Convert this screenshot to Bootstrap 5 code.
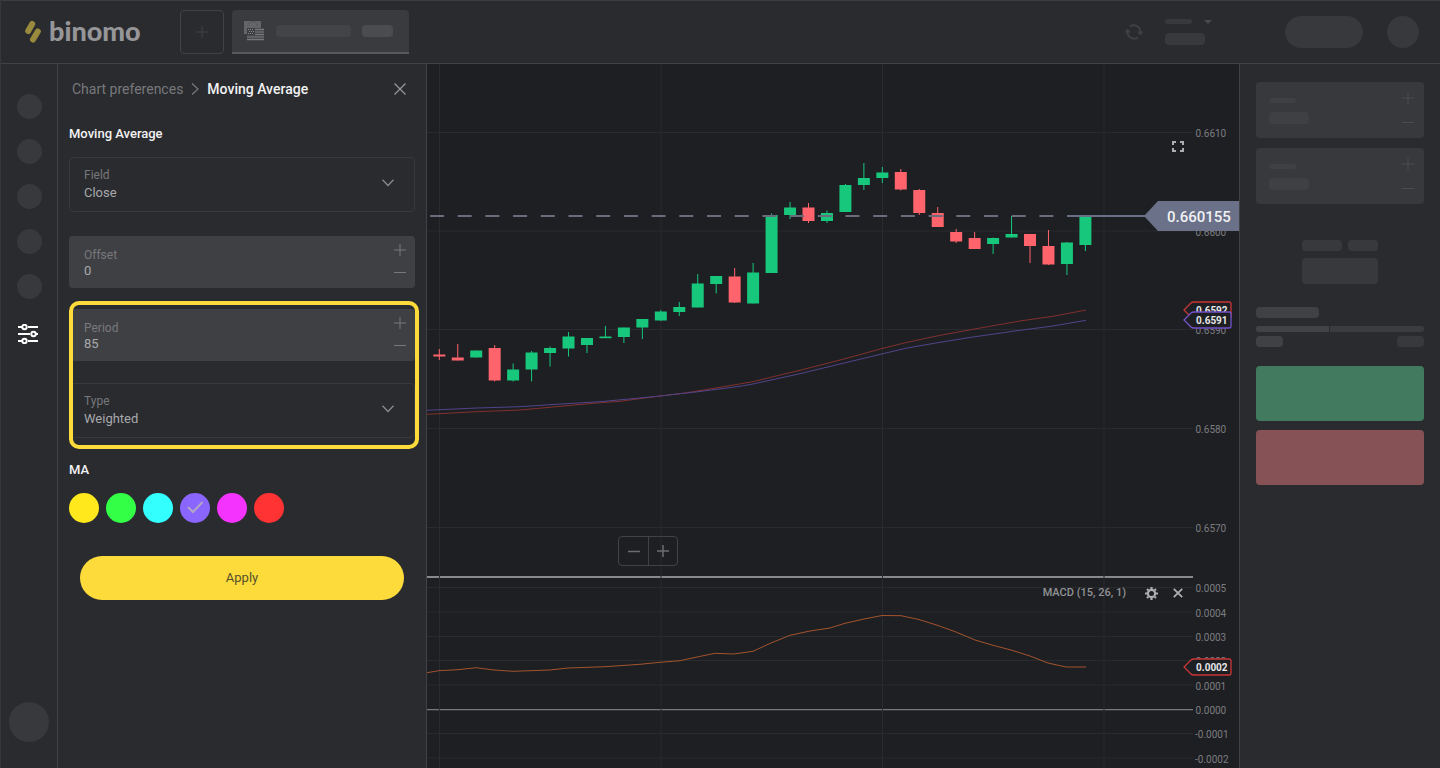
<!DOCTYPE html>
<html lang="en">
<head>
<meta charset="utf-8">
<meta name="viewport" content="width=device-width, initial-scale=1">
<title>Binomo – Chart preferences</title>
<link href="https://cdn.jsdelivr.net/npm/bootstrap@5.3.0/dist/css/bootstrap.min.css" rel="stylesheet">
<style>
  :root { --panel: #2a2b2f; --chart: #1e1f23; --line: #414246; --block: #38393d; --block-lit: #404145; }
  body { background: var(--panel); color: #a8a9ac; font-family: Roboto, "Liberation Sans", sans-serif; font-size: 14px; line-height: 20px; border-left: 1px solid #36373b; }
  .plain { background: none; border: 0; padding: 0; line-height: 0; color: #77787b; }
  svg { display: block; flex: none; }

  .topbar { height: 64px; border-top: 1px solid #3c3d41; border-bottom: 1px solid var(--line); padding: 0 21px 0 24px; }
  .brand { font-family: Lato, sans-serif; font-weight: 900; font-size: 27px; line-height: 30px; gap: 8px; width: 155px; padding-bottom: 2px; }
  .brand, .brand:hover { color: #969698; }
  .tab-add { width: 44px; height: 44px; border: 1px solid #414246; border-radius: 4px; color: #414246; margin-right: 8px; }
  .tab-asset { width: 177px; height: 44px; background: #3a3b3f; border-bottom: 2px solid #56575b; border-radius: 4px 4px 0 0; padding: 0 16px 0 12px; }
  .tab-asset .ph { background: #434448; }
  .tab-asset .ph:last-child { background: #4b4c50; }
  .ph { background: var(--block); border-radius: 4px; display: block; }
  .ph-lit { background: var(--block-lit); }
  .w27 { width: 27px; } .w31 { width: 31px; } .w40 { width: 40px; } .w63 { width: 63px; } .w75 { width: 75px; }
  .t5 { height: 5px; } .t11 { height: 11px; } .t12 { height: 12px; } .t26 { height: 26px; }
  .gap6 { gap: 6px; }
  .balance { width: 47px; margin: 0 73px 0 22px; }
  .balance .w40 { margin-top: 9px; }
  .deposit { width: 78px; height: 32px; border-radius: 16px; margin-right: 24px; }
  .avatar { width: 32px; height: 32px; border-radius: 50%; }

  .rail { width: 57px; border-right: 1px solid #424347; flex: none; padding: 30px 0 26px; }
  .rail-list { gap: 20px; }
  .rail-dot { width: 25px; height: 25px; border-radius: 50%; background: var(--block); }
  .rail-tune { height: 29px; color: #fff; }
  .rail-user { width: 40px; height: 40px; }

  .side { width: 369px; flex: none; border-right: 1px solid var(--line); padding: 15px 11px 0; }
  .crumbs { font-size: 14px; gap: 8px; padding: 0 9px 0 3px; margin-bottom: 25px; }
  .crumbs a { color: #77787b; }
  .crumbs .now { color: #f2f2f3; font-weight: 500; }
  .head { font-size: 13px; line-height: 20px; font-weight: 500; color: #f2f2f3; margin: 0 0 13px; }
  .field { border-radius: 4px; }
  .field label { display: block; font-size: 12px; line-height: 14px; color: #77787b; }
  .field input, .field select { appearance: none; background: none; border: 0; padding: 0; width: 100%; display: block; color: #a8a9ac; font-size: 13px; line-height: 20px; height: 20px; outline: 0; }
  .field-pick { border: 1px solid #38393d; height: 55px; padding: 10px 20px 0 14px; color: #8a8b8e; }
  .field-pick svg { pointer-events: none; margin-top: 11px; }
  .field-pick label { margin-bottom: 1px; }
  .field-num { background: #3f4044; height: 52px; padding: 12px 9px 0 15px; }
  .field-num input { height: 18px; line-height: 18px; }
  .steps { gap: 10px; margin-top: -4px; height: 34px; }
  .mt24 { margin-top: 24px; } .mt22 { margin-top: 22px; } .mt21 { margin-top: 21px; }
  .spot { position: relative; }
  .spot::after { content: ""; position: absolute; inset: -8px -4px -11px 0; border: 4px solid #fddb3b; border-radius: 10px; pointer-events: none; }
  .hues { gap: 7px; }
  .hue { position: relative; }
  .hue input { appearance: none; width: 30px; height: 30px; margin: 0; border-radius: 50%; display: block; }
  .hue svg { position: absolute; inset: 0; display: none; pointer-events: none; }
  .hue input:checked + svg { display: block; }
  .yellow { background: #ffe81c; } .green { background: #33ff47; } .cyan { background: #33ffff; }
  .violet { background: #8a66ff; } .pink { background: #f533ff; } .red { background: #ff3333; }
  .apply { background: #fddb3b; color: #55502b; border-radius: 22px; height: 44px; margin: 33px 11px 0; font-size: 13px; line-height: 20px; }
  .apply:hover { background: #ffe25a; }

  .chart { background: var(--chart); min-width: 0; position: relative; }
  .plot { width: 100%; height: 100%; }
  .plot text { font-size: 10px; fill: #7c7d80; }
  .plot .tag { font-weight: 700; fill: #e6e6e8; }
  .plot .price { font-size: 15px; font-weight: 500; fill: #f0f1f5; }
  .zoomer { position: absolute; left: 191px; top: 472px; border: 1px solid #414246; border-radius: 4px; }
  .zoomer button { width: 29px; height: 28px; color: #6c6d70; }
  .zoomer .more { border-left: 1px solid #414246; }
  .full { position: absolute; right: 55px; top: 77px; color: #aeaeb0; }
  .macd { position: absolute; right: 56px; top: 519px; gap: 15px; font-size: 11px; font-weight: 500; color: #929396; }
  .macd .plain { color: #aeaeb0; }
  .macd span { margin-right: 4px; }

  .trade { width: 201px; flex: none; border-left: 1px solid var(--line); padding: 18px 16px 0; }
  .stake { background: var(--block); border-radius: 4px; height: 56px; padding: 10px 10px 0 13px; margin-bottom: 10px; color: #4b4c50; }
  .stake .ph { background: #3f4044; }
  .stake .plain { color: #4b4c50; }
  .stake .w27 { margin: 6px 0 9px; }
  .stake .steps { gap: 12px; margin-top: 0; height: 36px; }
  .timer { width: 76px; margin: 36px auto 23px; gap: 7px; }
  .track { height: 6px; border-radius: 3px; margin: 8px 0 4px; background: #3b3c40; overflow: hidden; }
  .track span { background: #424347; border-right: 1px solid var(--panel); width: 44%; }
  .deal { height: 55px; border-radius: 4px; border: 0; }
  .deal-up { background: #427a60; margin: 19px 0 9px; }
  .deal-down { background: #865256; }
</style>
</head>
<body class="d-flex flex-column min-vh-100">

<svg width="0" height="0" class="position-absolute" aria-hidden="true">
  <symbol id="plus" viewBox="0 0 12 12"><path d="M6 0v12M0 6h12" stroke="currentColor" fill="none"/></symbol>
  <symbol id="minus" viewBox="0 0 12 12"><path d="M0 6.500h12" stroke="currentColor" fill="none"/></symbol>
  <symbol id="down" viewBox="0 0 12 8"><path d="M.5.8 6 6.500 11.500.8" stroke="currentColor" stroke-width="1.300" fill="none"/></symbol>
</svg>

<header class="topbar d-flex align-items-center">
  <a href="#" class="brand d-flex align-items-center text-decoration-none">
    <svg width="16" height="24" viewBox="0 0 16 24" fill="none" stroke="#9a8a3e" stroke-width="6" stroke-linecap="round"><path d="M3.200 12 7.200 5M8 20.500 12.800 12.500"/></svg>
    <span>binomo</span>
  </a>
  <button class="tab-add plain d-flex align-items-center justify-content-center" aria-label="Add asset"><svg width="12" height="12"><use href="#plus"/></svg></button>
  <button class="tab-asset plain d-flex align-items-center justify-content-between" aria-label="Current asset">
    <svg width="20" height="20" viewBox="0 0 20 20">
      <path fill="#646568" d="M0 0h17v13H0z"/><path d="M4 5a4.500 4.500 0 0 1 9 0" fill="none" stroke="#4b4c50" stroke-dasharray="1 1"/>
      <path fill="#4a4b4f" d="M3 7h17v13H3z"/><path d="M11 8.500h9M11 11h9M11 13.500h9M3 16h17M3 18.500h17" stroke="#77787b"/>
      <path fill="#3c3d41" d="M3 7h8v7H3z"/><path d="M4 8.500h6M5 10.500h6M4 12.500h6" stroke="#8a8b8e" stroke-dasharray="1 1"/>
    </svg>
    <span class="ph w75 t12"></span><span class="ph w31 t12"></span>
  </button>

  <button class="plain ms-auto" aria-label="Refresh">
    <svg width="18" height="16" viewBox="0 0 18 16" fill="none" stroke="#3f4044" stroke-width="2"><path d="M5 2.500A6.700 6.700 0 0 1 15.500 8M13 13.500A6.700 6.700 0 0 1 2.500 8"/><path fill="#3f4044" stroke="none" d="M12 7.500h6.500L15.500 11.500zM-.5 8.500h6.500L2.500 4.500z"/></svg>
  </button>
  <div class="balance">
    <div class="d-flex justify-content-between"><span class="ph w27 t5"></span><svg width="8" height="5" viewBox="0 0 8 5"><path fill="#48494d" d="M0 1h8L4 5z"/></svg></div>
    <span class="ph w40 t12"></span>
  </div>
  <span class="ph deposit"></span>
  <span class="ph avatar"></span>
</header>

<main class="d-flex flex-grow-1">
  <nav class="rail d-flex flex-column align-items-center justify-content-between" aria-label="Tools">
    <div class="rail-list d-flex flex-column align-items-center">
      <button class="plain rail-dot" aria-label="Tool 1"></button>
      <button class="plain rail-dot" aria-label="Tool 2"></button>
      <button class="plain rail-dot" aria-label="Tool 3"></button>
      <button class="plain rail-dot" aria-label="Tool 4"></button>
      <button class="plain rail-dot" aria-label="Tool 5"></button>
      <button class="plain rail-tune" aria-label="Chart preferences">
        <svg width="22" height="20" viewBox="0 0 22 20" fill="none" stroke="currentColor" stroke-width="2"><path d="M0 3h4M10 3h10M0 10h12M18 10h2M0 17h4M10 17h10"/><circle cx="6.500" cy="3" r="2.200"/><circle cx="15.500" cy="10" r="2.200"/><circle cx="6.500" cy="17" r="2.200"/></svg>
      </button>
    </div>
    <button class="plain rail-dot rail-user" aria-label="Profile"></button>
  </nav>

  <form class="side" onsubmit="return false">
    <div class="crumbs d-flex align-items-center">
      <a href="#" class="text-decoration-none">Chart preferences</a>
      <svg width="8" height="12" viewBox="0 0 8 12" fill="none" stroke="#77787b" stroke-width="1.200"><path d="M1 .5 7 6l-6 5.500"/></svg>
      <span class="now">Moving Average</span>
      <button type="button" class="plain ms-auto" aria-label="Close"><svg width="12" height="12" viewBox="0 0 12 12" stroke="#97989b" stroke-width="1.200"><path d="M.5.5l11 11M11.500.5l-11 11"/></svg></button>
    </div>

    <h2 class="head">Moving Average</h2>
    <div class="field field-pick d-flex">
      <div class="flex-grow-1"><label for="src">Field</label><select id="src"><option>Close</option><option>Open</option></select></div>
      <svg width="12" height="8"><use href="#down"/></svg>
    </div>

    <div class="field field-num d-flex mt24">
      <div class="flex-grow-1"><label for="offset">Offset</label><input id="offset" type="text" inputmode="numeric" value="0"></div>
      <div class="steps d-flex flex-column">
        <button type="button" class="plain" aria-label="Increase offset"><svg width="12" height="12"><use href="#plus"/></svg></button>
        <button type="button" class="plain" aria-label="Decrease offset"><svg width="12" height="12"><use href="#minus"/></svg></button>
      </div>
    </div>

    <div class="spot mt21">
      <div class="field field-num d-flex">
        <div class="flex-grow-1"><label for="period">Period</label><input id="period" type="text" inputmode="numeric" value="85"></div>
        <div class="steps d-flex flex-column">
          <button type="button" class="plain" aria-label="Increase period"><svg width="12" height="12"><use href="#plus"/></svg></button>
          <button type="button" class="plain" aria-label="Decrease period"><svg width="12" height="12"><use href="#minus"/></svg></button>
        </div>
      </div>
      <div class="field field-pick d-flex mt22">
        <div class="flex-grow-1"><label for="kind">Type</label><select id="kind"><option>Weighted</option><option>Simple</option></select></div>
        <svg width="12" height="8"><use href="#down"/></svg>
      </div>
    </div>

    <h2 class="head mt22">MA</h2>
    <div class="hues d-flex" role="radiogroup" aria-label="MA colour"></div>
    <div class="d-grid"><button class="btn apply">Apply</button></div>
  </form>

  <section class="chart flex-grow-1">
    <svg class="plot" id="plot" viewBox="427 64 812 704" preserveAspectRatio="xMaxYMin meet" role="img" aria-label="Price chart"></svg>
    <button class="plain full" aria-label="Full screen"><svg width="12" height="11" viewBox="0 0 12 11" fill="none" stroke="currentColor" stroke-width="2"><path d="M1 4V1h3M8 1h3v3M11 7v3H8M4 10H1V7"/></svg></button>
    <div class="zoomer d-flex">
      <button class="plain d-flex align-items-center justify-content-center" aria-label="Zoom out"><svg width="12" height="12" stroke-width="1.500"><use href="#minus"/></svg></button>
      <button class="plain more d-flex align-items-center justify-content-center" aria-label="Zoom in"><svg width="12" height="12" stroke-width="1.500"><use href="#plus"/></svg></button>
    </div>
    <div class="macd d-flex align-items-center">
      <span>MACD (15, 26, 1)</span>
      <button class="plain" aria-label="MACD settings"><svg width="13" height="13" viewBox="0 0 13 13" fill="none" stroke="currentColor"><circle cx="6.500" cy="6.500" r="3.600" stroke-width="2.200"/><path stroke-width="2.200" d="M6.500 0v2M6.500 11v2M0 6.500h2M11 6.500h2M2 2l1.300 1.300M9.700 9.700 11 11M11 2 9.700 3.300M3.300 9.700 2 11"/></svg></button>
      <button class="plain" aria-label="Remove MACD"><svg width="10" height="10" viewBox="0 0 10 10" stroke="currentColor" stroke-width="1.800"><path d="M.8.8l8.400 8.400M9.200.8.8 9.200"/></svg></button>
    </div>
  </section>

  <aside class="trade">
    <div class="stake d-flex justify-content-between">
      <div><span class="ph w27 t5"></span><span class="ph w40 t12"></span></div>
      <div class="steps d-flex flex-column"><button class="plain" aria-label="Raise amount"><svg width="12" height="12"><use href="#plus"/></svg></button><button class="plain" aria-label="Lower amount"><svg width="12" height="12"><use href="#minus"/></svg></button></div>
    </div>
    <div class="stake d-flex justify-content-between">
      <div><span class="ph w27 t5"></span><span class="ph w40 t12"></span></div>
      <div class="steps d-flex flex-column"><button class="plain" aria-label="Later"><svg width="12" height="12"><use href="#plus"/></svg></button><button class="plain" aria-label="Sooner"><svg width="12" height="12"><use href="#minus"/></svg></button></div>
    </div>
    <div class="timer d-flex flex-column">
      <div class="d-flex gap6"><span class="ph w40 t11"></span><span class="ph t11 flex-grow-1"></span></div>
      <span class="ph t26"></span>
    </div>
    <span class="ph ph-lit w63 t11"></span>
    <div class="track d-flex"><span></span></div>
    <div class="d-flex justify-content-between"><span class="ph ph-lit w27 t11"></span><span class="ph w27 t11"></span></div>
    <button class="deal deal-up d-block w-100" aria-label="Up"></button>
    <button class="deal deal-down d-block w-100" aria-label="Down"></button>
  </aside>
</main>

<script>
  const hues = ['yellow', 'green', 'cyan', 'violet', 'pink', 'red'];
  document.querySelector('.hues').innerHTML = hues.map(h =>
    `<label class="hue"><input type="radio" name="hue" class="${h}" aria-label="${h}"${h === 'violet' ? ' checked' : ''}><svg width="30" height="30" viewBox="0 0 30 30" fill="none" stroke="#b3a6c4" stroke-width="2"><path d="M8 14l5 5 9.500-10"/></svg></label>`).join('');

  // Candles: high, body top, body bottom, low, rising (1) or falling (0)
  const candles = [
    [349,354.5,356.5,360,0],[344,357.5,360.5,360.5,0],[350.5,350.5,357.5,357.5,1],[345,348,380.5,381.5,0],
    [363.5,369.5,380.5,381.5,1],[351,352.5,369.5,381.5,1],[346.5,348,353,366.5,1],[332,336.5,348.5,356.5,1],
    [338,338,345,353,1],[326,336.5,338.2,338,1],[327.5,327.5,337,343,1],[319,319,327.5,339,1],
    [310,311.5,320.5,321,1],[302,307,312,316,1],[274,283.5,307.5,307.5,1],[276,276,284,293.5,1],
    [268,276.5,302.5,303,0],[263,272.5,303.5,303.5,1],[213.5,215,273,273,1],[202,207.5,215,219,1],
    [203,207.5,221,223,0],[210.5,213,221,223,1],[184,185,212,212,1],[163,178,185,190,1],
    [167,172.5,178,183,1],[169,172,189.5,190.5,0],[189,190,213,215,0],[207,213,227,227,0],
    [229,232,241.5,243,0],[232,238,249,249,0],[237.5,238,244,254,1],[216,234,237.5,237.5,1],
    [234,234,246,263,0],[230,246,264.5,265,0],[242,242.5,264,275,1],[216,216.5,245,251,1]];
  const fast = '427,414.3 477,411.7 520,410 553,407 593,403.3 620,401.3 660,396 687,392.7 720,387.3 753,381.7 787,373.3 800,370.3 840,360 883,348.3 907,342.3 940,335.3 973,329.3 1020,321 1053,316.3 1086,310';
  const slow = '427,410.3 477,408 520,406.7 553,404.5 600,401.7 640,398 660,396 700,391.5 740,386.3 753,384 800,373.7 840,364 883,353.7 907,348 940,342.3 973,337 1020,330.3 1053,326 1086,320.3';
  const macd = '427,672.7 439,670.7 458,669.7 476,667.7 494,670 513,671.3 550,670 568,668 605,666.7 640,664.3 660,662.3 680,660.7 697,657 715,653.3 734,654 753,651.3 771,643 790,635.3 810,631 830,628 845,623.3 864,619 882,615.5 901,615.7 919,619.5 938,625.5 956,632 975,640 993,645.3 1011,650 1030,656 1048,663 1066,667 1086,667';
  const scale = [[132.5,'0.6610'],[231,'0.6600'],[329.5,'0.6590'],[428.5,'0.6580'],[527.5,'0.6570'],
    [587.5,'0.0005'],[612,'0.0004'],[636.5,'0.0003'],[660.5,'0.0002'],[685,'0.0001'],[709.5,'0.0000'],[733.5,'-0.0001'],[758,'-0.0002']];

  const curve = (points, colour) => `<polyline points="${points}" fill="none" stroke="${colour}"/>`;
  const tag = (y, label, colour) => `<path d="M1184 ${y}l7-7q1-1 3-1h35q2 0 2 2v12q0 2-2 2h-35q-2 0-3-1z" fill="#1e1f23" stroke="${colour}" stroke-width="1.300"/><text class="tag" x="1196" y="${y + 4}">${label}</text>`;
  let s = '';
  for (const [y, label] of scale) s += `<path d="M427 ${y}H1193" stroke="#2a2b2f"/><text x="${label[0] === '-' ? 1195 : 1195.5}" y="${y + 4.5}">${label}</text>`;
  s += '<path d="M427 577H1193" stroke="#88898c" stroke-width="2"/><path d="M427 709.700H1193" stroke="#77787b" stroke-width="1.300"/>';
  for (const x of [439.5, 661, 882.5, 1104]) s += `<path d="M${x} 64V768" stroke="#2a2b2f"/>`;
  candles.forEach(([high, top, bottom, low, up], i) => {
    const x = 439.3 + i * 18.46, c = up ? '#17c77c' : '#ff646c';
    s += `<path d="M${x} ${high}V${low}" stroke="${c}"/><path d="M${x - 6} ${top}h12V${bottom}h-12z" fill="${c}"/>`;
  });
  s += curve(fast, '#81302f') + curve(slow, '#51438a') + curve(macd, '#a4532e');
  s += '<path d="M430 216H1067" stroke="#6a6c7b" stroke-width="2" stroke-dasharray="14 13.700"/><path d="M1067 216H1145" stroke="#6a7084" stroke-width="2"/>';
  s += '<path d="M1144 216l14-15h81v30h-81z" fill="#6b7188"/><text class="price" x="1167" y="222">0.660155</text>';
  s += tag(310, '0.6592', '#c93636') + tag(320, '0.6591', '#7452c8') + tag(667, '0.0002', '#c93636');
  document.getElementById('plot').innerHTML = s;
</script>
<script src="https://cdn.jsdelivr.net/npm/bootstrap@5.3.0/dist/js/bootstrap.bundle.min.js"></script>
</body>
</html>
